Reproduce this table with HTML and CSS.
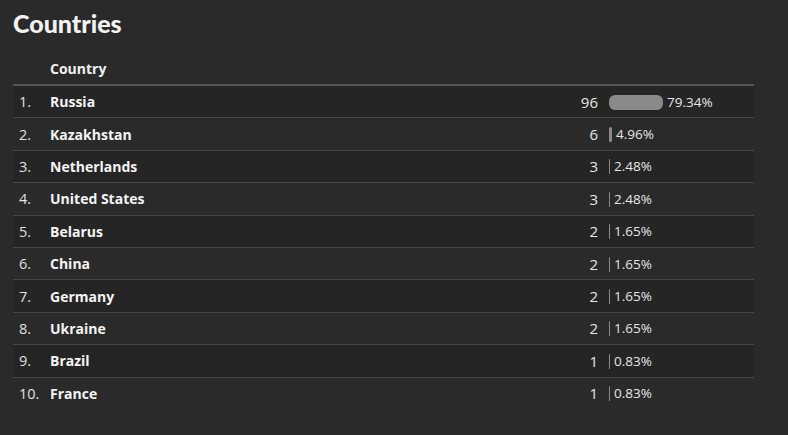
FILE: index.html
```html
<!DOCTYPE html>
<html>
<head>
<meta charset="utf-8">
<link rel="stylesheet" href="styles.css">
</head>
<body>
<div class="panel">
  <h1 class="title">Countries</h1>
  <table class="tbl">
    <thead>
      <tr><th class="rank"></th><th class="name">Country</th><th class="count"></th><th class="pct"></th></tr>
    </thead>
    <tbody>
      <tr><td class="rank">1.</td><td class="name">Russia</td><td class="count">96</td><td class="pct"><span class="bar" style="width:54px"></span>79.34%</td></tr>
      <tr><td class="rank">2.</td><td class="name">Kazakhstan</td><td class="count">6</td><td class="pct"><span class="bar" style="width:3px"></span>4.96%</td></tr>
      <tr><td class="rank">3.</td><td class="name">Netherlands</td><td class="count">3</td><td class="pct"><span class="bar" style="width:1px"></span>2.48%</td></tr>
      <tr><td class="rank">4.</td><td class="name">United States</td><td class="count">3</td><td class="pct"><span class="bar" style="width:1px"></span>2.48%</td></tr>
      <tr><td class="rank">5.</td><td class="name">Belarus</td><td class="count">2</td><td class="pct"><span class="bar" style="width:1px"></span>1.65%</td></tr>
      <tr><td class="rank">6.</td><td class="name">China</td><td class="count">2</td><td class="pct"><span class="bar" style="width:1px"></span>1.65%</td></tr>
      <tr><td class="rank">7.</td><td class="name">Germany</td><td class="count">2</td><td class="pct"><span class="bar" style="width:1px"></span>1.65%</td></tr>
      <tr><td class="rank">8.</td><td class="name">Ukraine</td><td class="count">2</td><td class="pct"><span class="bar" style="width:1px"></span>1.65%</td></tr>
      <tr><td class="rank">9.</td><td class="name">Brazil</td><td class="count">1</td><td class="pct"><span class="bar" style="width:1px"></span>0.83%</td></tr>
      <tr><td class="rank">10.</td><td class="name">France</td><td class="count">1</td><td class="pct"><span class="bar" style="width:1px"></span>0.83%</td></tr>
    </tbody>
  </table>
</div>
</body>
</html>
```
FILE: styles.css
```css
html, body {
  margin: 0;
  padding: 0;
  background: #2a2a2a;
}
body {
  font-family: "Open Sans", "Liberation Sans", sans-serif;
  color: #e8e8e8;
}
.panel {
  padding: 7px 34px 0 13px;
}
.title {
  margin: 0;
  font-family: Lato, "Open Sans", sans-serif;
  font-weight: 900;
  font-size: 25px;
  line-height: 32px;
  color: #f2f2f2;
}
.tbl {
  width: 741px;
  margin-top: 13px;
  border-collapse: collapse;
  font-size: 14px;
}
.tbl th {
  height: 32px;
  padding: 0;
  text-align: left;
  font-weight: 700;
  color: #f0f0f0;
  border-bottom: 2px solid #555555;
  vertical-align: middle;
}
.tbl td {
  height: 31.4px;
  padding: 0;
  border-bottom: 1px solid #464646;
  vertical-align: middle;
}
.tbl tbody tr:nth-child(odd) {
  background: #252525;
}
.tbl tbody tr:last-child td {
  border-bottom: none;
}
.rank {
  width: 37px;
  padding-left: 6px !important;
  box-sizing: border-box;
  color: #e0e0e0;
  font-size: 14.5px;
}
.tbl td.name {
  font-weight: 700;
  color: #f4f4f4;
}
.count {
  text-align: right;
  font-size: 15px;
  color: #e6e6e6;
}
.pct {
  width: 145px;
  padding-left: 11px !important;
  white-space: nowrap;
  font-size: 13.5px;
  color: #e6e6e6;
}
.bar {
  display: inline-block;
  height: 15px;
  margin-right: 4px;
  vertical-align: -3px;
  background: #8a8a8a;
  border-radius: 6px;
}
```
